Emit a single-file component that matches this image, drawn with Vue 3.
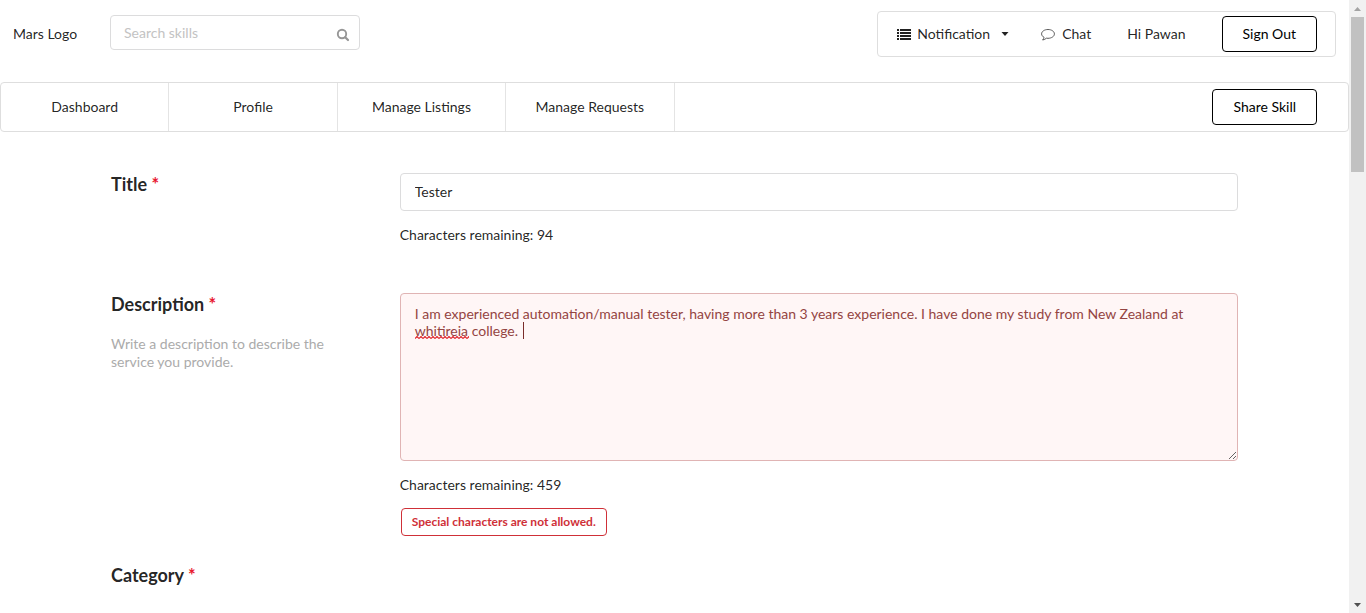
<script setup>
import { ref } from 'vue'

const links = ['Dashboard', 'Profile', 'Manage Listings', 'Manage Requests']
const title = ref('Tester')
const description = ref(
  'I am experienced automation/manual tester, having more than 3 years experience. I have done my study from New Zealand at whitireia college. '
)
</script>

<template>
  <div class="screen">
    <div class="page">
      <header class="top">
        <span class="logo">Mars Logo</span>
        <form class="search" role="search" @submit.prevent>
          <input type="text" placeholder="Search skills" aria-label="Search skills" />
          <svg class="search-icon" viewBox="0 0 14 14" aria-hidden="true">
            <circle cx="6" cy="6" r="4.200" fill="none" stroke="currentColor" stroke-width="1.900" />
            <path d="M9.200 9.200 L12 12" stroke="currentColor" stroke-width="2.200" stroke-linecap="round" />
          </svg>
        </form>
        <div class="account">
          <button type="button" class="item notification">
            <svg class="list" viewBox="0 0 14 11" aria-hidden="true">
              <path d="M0 0h2v2H0zM3 0h11v2H3zM0 3h2v2H0zM3 3h11v2H3zM0 6h2v2H0zM3 6h11v2H3zM0 9h2v2H0zM3 9h11v2H3z" fill="currentColor" />
            </svg>
            <span>Notification</span>
            <svg class="caret" viewBox="0 0 8 4" aria-hidden="true"><path d="M.5 0h7L4 4z" fill="currentColor" /></svg>
          </button>
          <a href="#" class="item chat">
            <svg class="bubble" viewBox="0 0 14 13" aria-hidden="true">
              <path d="M7 1.500C3.500 1.500.6 3.400.6 5.900c0 1.500 1 2.700 2.500 3.500-.2 1-.7 1.800-1.500 2.600 1.500-.2 2.800-.8 3.800-1.800.5.1 1 .1 1.600.1 3.500 0 6.400-1.900 6.400-4.400S10.500 1.500 7 1.500z" fill="none" stroke="currentColor" stroke-width=".9" stroke-linejoin="round" />
            </svg>
            <span>Chat</span>
          </a>
          <span class="item">Hi Pawan</span>
          <button type="button" class="button sign-out">Sign Out</button>
        </div>
      </header>

      <nav class="nav">
        <a v-for="link in links" :key="link" href="#" class="tab">{{ link }}</a>
        <button type="button" class="button share">Share Skill</button>
      </nav>

      <main class="form">
        <section class="row">
          <div class="cell">
            <label class="heading" for="title">Title <span class="star">*</span></label>
          </div>
          <div class="cell">
            <input id="title" v-model="title" class="text" type="text" />
            <p class="count">Characters remaining: 94</p>
          </div>
        </section>
        <section class="row">
          <div class="cell">
            <label class="heading" for="description">Description <span class="star">*</span></label>
            <p class="hint">Write a description to describe the service you provide.</p>
          </div>
          <div class="cell">
            <div class="area">
              <textarea id="description" v-model="description" spellcheck="false" aria-invalid="true" aria-describedby="error"></textarea>
              <svg class="squiggle" aria-hidden="true">
                <defs>
                  <pattern id="wave" width="4" height="3" patternUnits="userSpaceOnUse">
                    <path d="M0 2.500 L2 .5 L4 2.500" fill="none" stroke="#e0262c" stroke-width="1.200" />
                  </pattern>
                </defs>
                <rect width="100%" height="3" fill="url(#wave)" />
              </svg>
              <span class="cursor"></span>
            </div>
            <p class="count">Characters remaining: 459</p>
            <p id="error" class="error">Special characters are not allowed.</p>
          </div>
        </section>
        <section class="row">
          <div class="cell">
            <h3 class="heading">Category <span class="star">*</span></h3>
          </div>
        </section>
      </main>
    </div>

    <div class="scrollbar" aria-hidden="true">
      <svg viewBox="0 0 17 17"><path d="M5 11h7L8.500 7z" fill="#a3a3a3" /></svg>
      <div class="thumb"></div>
      <svg class="down" viewBox="0 0 17 17"><path d="M5 7h7L8.500 11z" fill="#505050" /></svg>
    </div>
  </div>
</template>

<style>
body {
  margin: 0;
  background: #fff;
}
</style>

<style scoped>
.screen {
  display: flex;
  height: 100vh;
  overflow: hidden;
  font: 14px/18px Lato, "Liberation Sans", sans-serif;
  color: rgba(0, 0, 0, 0.87);
}
.screen * {
  box-sizing: border-box;
}
.page {
  flex: 1;
  min-width: 0;
}
input,
textarea,
button {
  font: inherit;
  color: inherit;
}
a {
  color: inherit;
  text-decoration: none;
}
p,
h3 {
  margin: 0;
}
.top {
  display: flex;
  align-items: flex-start;
  height: 82px;
  padding: 11px 13px;
}
.logo {
  width: 97px;
  padding-top: 14px;
}
.search {
  position: relative;
  width: 250px;
  margin-top: 4px;
}
.search input {
  display: block;
  width: 100%;
  height: 35px;
  padding: 0 36px 0 13px;
  border: 1px solid #dcdcdd;
  border-radius: 4px;
  outline: none;
}
.search input::placeholder {
  color: #c3c3c3;
  opacity: 1;
}
.search-icon {
  position: absolute;
  right: 10px;
  top: 13px;
  width: 14px;
  height: 14px;
  color: #969696;
}
.account {
  display: flex;
  align-items: center;
  height: 46px;
  margin-left: auto;
  padding: 0 18px;
  border: 1px solid #dedede;
  border-radius: 4px;
}
.item {
  display: flex;
  align-items: center;
  margin-right: 36px;
}
.notification {
  margin-right: 32px;
  padding: 0;
  border: 0;
  background: none;
}
.list {
  width: 14px;
  height: 11px;
  margin: 0 6px 0 1px;
}
.caret {
  width: 8px;
  height: 4px;
  margin-left: 11px;
}
.bubble {
  width: 14px;
  height: 13px;
  margin-right: 7px;
  color: #4a4a4a;
}
.button {
  height: 36px;
  padding: 0 20px;
  border: 1px solid #000;
  border-radius: 4px;
  background: #fff;
  color: #000;
}
.nav {
  display: flex;
  align-items: center;
  height: 50px;
  border: 1px solid #dedede;
  border-radius: 4px;
}
.tab {
  display: flex;
  align-items: center;
  justify-content: center;
  width: 12.5%;
  height: 100%;
  border-right: 1px solid #e4e4e4;
}
.share {
  margin-left: auto;
  margin-right: 31px;
}
.form {
  display: grid;
  gap: 28px;
  padding: 41px 97px 0;
}
.row {
  display: grid;
  grid-template-columns: 1fr 3fr;
  min-height: 92px;
}
.cell {
  padding: 0 14px;
}
.heading {
  display: block;
  font-size: 18px;
  line-height: 22px;
  font-weight: 700;
}
.star {
  color: #e8172f;
}
.hint {
  max-width: 240px;
  margin-top: 20px;
  color: #ababab;
}
.text {
  display: block;
  width: 100%;
  height: 38px;
  padding: 0 14px 2px;
  border: 1px solid #dcdcdd;
  border-radius: 4px;
  outline: none;
}
.count {
  margin-top: 15px;
  padding-bottom: 9px;
}
.area {
  position: relative;
}
textarea {
  display: block;
  width: 100%;
  height: 168px;
  padding: 11px 14px;
  border: 1px solid #e0b4b4;
  border-radius: 4px;
  background: #fff6f6;
  color: #944442;
  line-height: 17px;
  outline: none;
  resize: vertical;
}
.squiggle {
  position: absolute;
  left: 15px;
  top: 43px;
  width: 54px;
  height: 3px;
}
.cursor {
  position: absolute;
  left: 123px;
  top: 29px;
  width: 1px;
  height: 17px;
  background: #7a2c2a;
}
.error {
  width: fit-content;
  margin: 5px 0 0 1px;
  padding: 4px 10px;
  border: 1px solid #cf3038;
  border-radius: 4px;
  color: #cf3038;
  font-size: 12px;
  font-weight: 700;
}
.scrollbar {
  display: flex;
  flex-direction: column;
  width: 17px;
  background: #f1f1f1;
}
.scrollbar svg {
  width: 17px;
  height: 17px;
}
.thumb {
  height: 155px;
  margin: 0 2px;
  background: #c1c1c1;
}
.down {
  margin-top: auto;
}
</style>
